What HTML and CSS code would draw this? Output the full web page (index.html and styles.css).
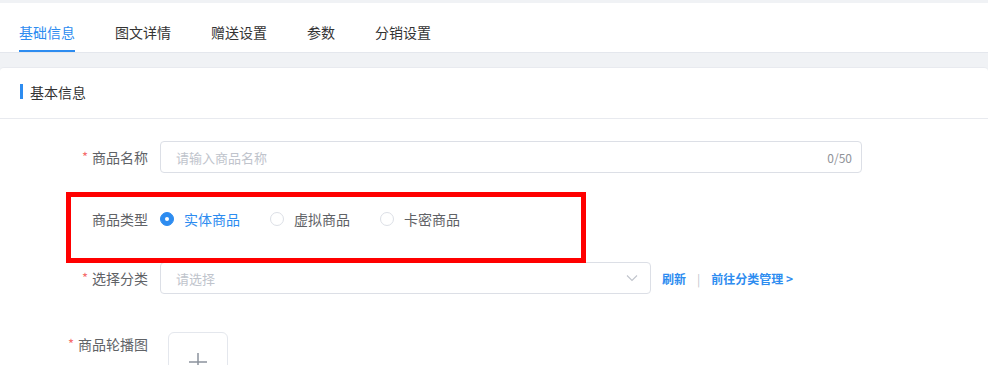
FILE: index.html
```html
<!DOCTYPE html>
<html lang="zh">
<head>
<meta charset="utf-8">
<title>商品编辑</title>
<link rel="stylesheet" href="styles.css">
</head>
<body>
<div class="page">
  <div class="tabs">
    <div class="tab active">基础信息</div>
    <div class="tab">图文详情</div>
    <div class="tab">赠送设置</div>
    <div class="tab">参数</div>
    <div class="tab">分销设置</div>
  </div>
  <div class="card">
    <div class="card-head"><span class="bar"></span>基本信息</div>
    <div class="form">
      <div class="row row-name">
        <label class="label"><span class="req">*</span>商品名称</label>
        <div class="input wide">
          <span class="ph">请输入商品名称</span>
          <span class="count">0/50</span>
        </div>
      </div>
      <div class="row row-type">
        <label class="label">商品类型</label>
        <div class="radios">
          <span class="radio checked"><span class="dot"></span><span class="rtext">实体商品</span></span>
          <span class="radio"><span class="dot"></span><span class="rtext">虚拟商品</span></span>
          <span class="radio"><span class="dot"></span><span class="rtext">卡密商品</span></span>
        </div>
      </div>
      <div class="row row-cat">
        <label class="label"><span class="req">*</span>选择分类</label>
        <div class="input select">
          <span class="ph">请选择</span>
          <svg class="chev" width="12" height="8" viewBox="0 0 12 8"><path d="M1 1.5 L6 6.5 L11 1.5" fill="none" stroke="#c0c4cc" stroke-width="1.1"/></svg>
        </div>
        <a class="link">刷新</a>
        <span class="sep">|</span>
        <a class="link">前往分类管理 &gt;</a>
      </div>
      <div class="row row-img">
        <label class="label"><span class="req">*</span>商品轮播图</label>
        <div class="upload">
          <svg width="18" height="18" viewBox="0 0 18 18" class="plus"><path d="M9 0 V18 M0 9 H18" stroke="#8c939d" stroke-width="1.5"/></svg>
        </div>
      </div>
    </div>
  </div>
  <div class="highlight"></div>
</div>
</body>
</html>
```
FILE: styles.css
```css
* { box-sizing: border-box; }
html, body { margin: 0; padding: 0; }
body {
  background: #f0f2f5;
  font-family: "Noto Sans CJK SC", "Noto Sans", sans-serif;
  color: #333;
  width: 988px;
  height: 365px;
  overflow: hidden;
}
.page { position: relative; padding-top: 3px; }
.tabs {
  display: flex;
  gap: 40px;
  background: #fff;
  height: 50px;
  padding-left: 19px;
  border-bottom: 1px solid #e4e7ed;
}
.tab {
  font-size: 14px;
  line-height: 20px;
  padding-top: 19px;
  height: 49px;
  color: #333;
  border-bottom: 2px solid transparent;
}
.tab.active { color: #2d8cf0; border-bottom-color: #2d8cf0; }
.card {
  margin-top: 14px;
  background: #fff;
  border-radius: 4px;
  border-top: 1px solid #e8eaef;
  height: 400px;
}
.card-head {
  display: flex;
  align-items: center;
  height: 51px;
  padding-left: 20px;
  padding-bottom: 3px;
  font-size: 14px;
  color: #333;
  border-bottom: 1px solid #e8eaef;
}
.bar {
  display: inline-block;
  width: 3px;
  height: 15px;
  background: #2d8cf0;
  margin-right: 7px;
}
.form { padding-top: 22px; }
.row { display: flex; align-items: center; }
.label {
  width: 160px;
  padding-right: 12px;
  text-align: right;
  font-size: 14px;
  color: #606266;
  flex-shrink: 0;
}
.req { color: #f56c6c; margin-right: 4px; font-size: 13px; position: relative; top: -1px; }
.input {
  height: 32px;
  border: 1px solid #dcdfe6;
  border-radius: 4px;
  display: flex;
  align-items: center;
  padding: 0 9px 0 15px;
  font-size: 13px;
}
.ph { color: #c0c4cc; flex: 1; }
.wide { width: 702px; }
.count { color: #909399; font-size: 12px; }
.row-type { margin-top: 30px; height: 32px; }
.radios { display: flex; gap: 30px; }
.radio { display: flex; align-items: center; font-size: 14px; color: #606266; }
.dot {
  width: 14px; height: 14px; border-radius: 50%;
  border: 1px solid #dcdfe6; background: #fff;
  margin-right: 10px; position: relative;
}
.radio.checked { color: #2d8cf0; }
.radio.checked .dot { background: #2d8cf0; border-color: #2d8cf0; }
.radio.checked .dot::after {
  content: ""; position: absolute; left: 4px; top: 4px;
  width: 4px; height: 4px; border-radius: 50%; background: #fff;
}
.row-cat { margin-top: 27px; }
.select { width: 491px; padding-right: 12px; }
.chev { display: block; }
.link { color: #2d8cf0; font-size: 12px; font-weight: 600; margin-left: 11px; }
.sep { color: #c0c4cc; font-size: 12px; margin-left: 11px; }
.row-img { margin-top: 38px; align-items: flex-start; }
.row-img .label { line-height: 24px; }
.upload {
  margin-left: 8px;
  width: 60px; height: 60px;
  border: 1px solid #e4e7ed;
  border-radius: 6px;
  display: flex; align-items: center; justify-content: center;
}
.plus { display: block; }
.highlight {
  position: absolute;
  left: 66px; top: 192px;
  width: 520px; height: 71px;
  border: 5px solid #ff0000;
}
```
